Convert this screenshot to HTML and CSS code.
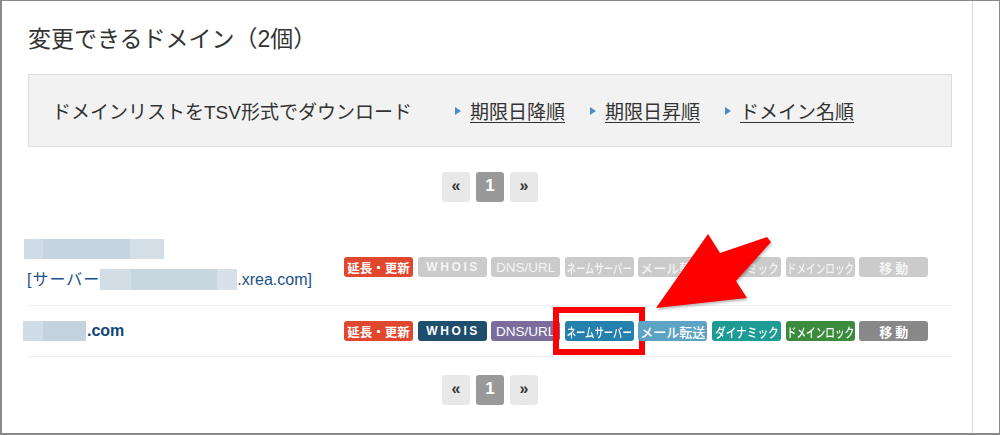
FILE: index.html
```html
<!DOCTYPE html>
<html lang="ja">
<head>
<meta charset="utf-8">
<title>変更できるドメイン</title>
<link rel="stylesheet" href="styles.css">
</head>
<body>
<div class="frame">
  <main class="panel">
    <h2 class="title">変更できるドメイン（2個）</h2>
    <div class="dl-box">
      <span class="dl-label">ドメインリストをTSV形式でダウンロード</span>
      <ul class="sort-links">
        <li><a href="#">期限日降順</a></li>
        <li><a href="#">期限日昇順</a></li>
        <li><a href="#">ドメイン名順</a></li>
      </ul>
    </div>
    <nav class="pager">
      <a class="pg" href="#">«</a>
      <span class="pg current">1</span>
      <a class="pg" href="#">»</a>
    </nav>
    <div class="domain-list">
      <div class="row row-first">
        <div class="name-col">
          <div class="blur blur-a"></div>
          <div class="server-line"><span class="srv">[サーバー</span><span class="blur blur-b"></span>.xrea.com]</div>
        </div>
        <div class="btns btns-first">
          <span class="btn red">延長・更新</span>
          <span class="btn off wide">WHOIS</span>
          <span class="btn off dns">DNS/URL</span>
          <span class="btn off kana"><span class="sq sq76">ネームサーバー</span></span>
          <span class="btn off kana">メール転送</span>
          <span class="btn off kana"><span class="sq sq87">ダイナミック</span></span>
          <span class="btn off kana"><span class="sq sq79">ドメインロック</span></span>
          <span class="btn off spaced">移動</span>
        </div>
      </div>
      <div class="row row-second">
        <div class="name-col">
          <div class="domain-line"><span class="blur blur-c"></span><span class="tld">.com</span></div>
        </div>
        <div class="btns">
          <span class="btn red">延長・更新</span>
          <span class="btn navy wide">WHOIS</span>
          <span class="btn purple dns">DNS/URL</span>
          <span class="btn blue kana marked"><span class="sq sq76">ネームサーバー</span></span>
          <span class="btn sky kana">メール転送</span>
          <span class="btn teal kana"><span class="sq sq87">ダイナミック</span></span>
          <span class="btn green kana"><span class="sq sq79">ドメインロック</span></span>
          <span class="btn gray spaced">移動</span>
        </div>
      </div>
    </div>
    <nav class="pager pager-bottom">
      <a class="pg" href="#">«</a>
      <span class="pg current">1</span>
      <a class="pg" href="#">»</a>
    </nav>
  </main>
  <svg class="arrow" width="150" height="95" viewBox="0 0 150 95" aria-hidden="true">
    <polygon points="16,83 68,9 80,28 127,12 131,17 96,56 107,73" fill="#ff0000"/>
  </svg>
</div>
</body>
</html>
```

FILE: styles.css
```css
* { box-sizing: border-box; }

body {
  margin: 0;
  font-family: "Liberation Sans", "Noto Sans CJK JP", sans-serif;
  color: #333;
  background: #fff;
}

.frame {
  position: relative;
  width: 1000px;
  height: 435px;
  border-style: solid;
  border-color: #8a8a8a;
  border-width: 1px 1px 2px 2px;
  display: flex;
  overflow: hidden;
}

.panel {
  width: 971px;
  height: 100%;
  border-right: 1px solid #dcdcdc;
  padding: 23px 20px 0 26px;
}

.title {
  margin: 0;
  font-size: 23px;
  line-height: 30px;
  font-weight: normal;
  color: #333;
  font-family: "Liberation Sans", "Noto Sans CJK JP", sans-serif;
}

.dl-box {
  margin-top: 20px;
  height: 73px;
  background: #f2f2f2;
  border: 1px solid #dddddd;
  display: flex;
  align-items: center;
  padding-left: 23px;
  font-size: 19px;
}

.dl-label {
  color: #333;
}

.sort-links {
  list-style: none;
  margin: 0 0 0 43px;
  padding: 0;
  display: flex;
}

.sort-links li {
  display: flex;
  align-items: center;
  margin-right: 25px;
}

.sort-links li::before {
  content: "";
  display: block;
  width: 0;
  height: 0;
  border-top: 4px solid transparent;
  border-bottom: 4px solid transparent;
  border-left: 6px solid #4a8cc8;
  margin-right: 9px;
}

.sort-links a {
  color: #333;
  text-decoration: underline;
  text-underline-offset: 3px;
}

.pager {
  margin-top: 25px;
  display: flex;
  justify-content: center;
  gap: 6px;
}

.pager-bottom {
  margin-top: 18px;
}

.pg {
  width: 28px;
  height: 30px;
  border-radius: 3px;
  background: #e8e8e8;
  color: #333;
  text-decoration: none;
  font-weight: bold;
  font-size: 16px;
  display: flex;
  align-items: center;
  justify-content: center;
  padding-bottom: 2px;
}

.pg.current {
  background: #999999;
  color: #fff;
  font-size: 17px;
}

.domain-list {
  margin-top: 25px;
}

.row {
  display: flex;
  align-items: center;
  border-bottom: 1px solid #eeeeee;
}

.row-first {
  padding: 12px 0 14px;
}

.row-second {
  padding: 14px 0 14px;
}

.name-col {
  width: 316px;
  flex-shrink: 0;
}

.blur {
  display: inline-block;
  vertical-align: middle;
}

.blur-a {
  display: block;
  margin-left: -4px;
  width: 140px;
  height: 20px;
  background: linear-gradient(to right, #d0dce5 0, #d0dce5 19px, #c5d4df 19px, #c5d4df 106px, #d3dee7 106px);
}

.server-line {
  margin-top: 10px;
  font-size: 16px;
  line-height: 22px;
  color: #1b5186;
  margin-left: -1px;
}

.srv {
  letter-spacing: 1px;
}

.blur-b {
  width: 137px;
  height: 21px;
  background: linear-gradient(to right, #d2dde6 0, #d2dde6 31px, #c8d6e0 31px, #c8d6e0 117px, #d7e1e9 117px);
  margin-top: -3px;
}

.domain-line {
  height: 22px;
  display: flex;
  align-items: center;
  margin-left: -5px;
}

.blur-c {
  width: 63px;
  height: 20px;
  background: linear-gradient(to right, #d1dde6 0, #d1dde6 20px, #c3d2dd 20px);
}

.tld {
  font-size: 16px;
  font-weight: bold;
  color: #0f4673;
  margin-left: 1px;
}

.btns {
  display: flex;
  gap: 4.6px;
}

.btns-first {
  margin-top: 4px;
}

.btn {
  position: relative;
  width: 69px;
  height: 20px;
  border-radius: 3px;
  display: flex;
  align-items: center;
  justify-content: center;
  color: #fff;
  font-size: 12.5px;
  font-weight: bold;
  white-space: nowrap;
  font-family: "Noto Sans CJK JP", sans-serif;
}

.btn.kana {
  font-weight: 500;
  font-size: 13px;
}

.btn.wide {
  font-family: "Liberation Sans", sans-serif;
  font-size: 12px;
  letter-spacing: 2.6px;
  padding-left: 2px;
}

.btn.dns {
  font-family: "Liberation Sans", sans-serif;
  font-weight: normal;
  font-size: 13.5px;
}

.btn.spaced {
  letter-spacing: 3px;
  padding-left: 3px;
  font-size: 13px;
}

.sq {
  display: inline-block;
  flex-shrink: 0;
}

.sq76 { transform: scaleX(0.72); }
.sq87 { transform: scaleX(0.82); }
.sq79 { transform: scaleX(0.74); }

.btn.red { background: #e1462f; }
.btn.off { background: #cbcbcb; color: #f4f4f4; }
.btn.navy { background: #1f4d6d; }
.btn.purple { background: #7b6c9d; }
.btn.blue { background: #2480ad; }
.btn.sky { background: #5ea3c4; }
.btn.teal { background: #1f9b95; }
.btn.green { background: #3a8b3c; }
.btn.gray { background: #888888; }

.btn.marked::after {
  content: "";
  position: absolute;
  left: -12px;
  right: -11px;
  top: -14px;
  bottom: -14px;
  border: 6px solid #ff0000;
}

.arrow {
  position: absolute;
  left: 638px;
  top: 224px;
  filter: drop-shadow(1px 2px 1px rgba(0, 0, 0, 0.25));
}
```
